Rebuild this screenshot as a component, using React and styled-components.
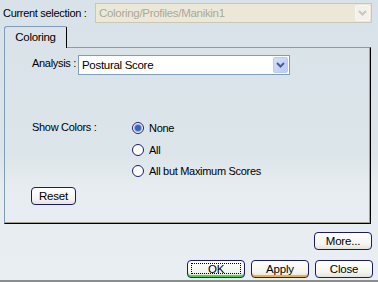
import React from "react";
import styled, { createGlobalStyle, css } from "styled-components";

const Global = createGlobalStyle`
  html, body {
    margin: 0;
    padding: 0;
  }
  body {
    font-family: "Liberation Sans", Arial, sans-serif;
    font-size: 11px;
    color: #000;
  }
`;

const Dialog = styled.div`
  width: 378px;
  height: 282px;
  box-sizing: border-box;
  background: linear-gradient(#d9e2e8 0%, #dce5ea 55%, #e6ecef 66%, #e8eef1 100%);
  border-bottom: 2px solid #8c8c8c;
  display: flex;
  flex-direction: column;
  font-family: "Liberation Sans", Arial, sans-serif;
  font-size: 11px;
  letter-spacing: -0.3px;
`;

const SelectionRow = styled.div`
  display: flex;
  align-items: center;
  padding: 3px 6px 0 3px;
  height: 20px;
`;

const Label = styled.span`
  white-space: nowrap;
  margin-right: ${(p) => p.$gap ?? 5}px;
  width: ${(p) => (p.$width ? `${p.$width}px` : "auto")};
  flex: none;
`;

const Combo = styled.div`
  display: flex;
  align-items: stretch;
  box-sizing: border-box;
  height: 20px;
  width: ${(p) => (p.$width ? `${p.$width}px` : "auto")};
  flex: ${(p) => (p.$width ? "none" : "1")};
  border: 1px solid ${(p) => (p.$disabled ? "#c9c7ba" : "#7f9db9")};
  background: ${(p) => (p.$disabled ? "#ebe8d7" : "#fff")};
  color: ${(p) => (p.$disabled ? "#aca899" : "#000")};
`;

const ComboText = styled.span`
  flex: 1;
  display: flex;
  align-items: center;
  padding-left: 3px;
  font-size: 11.5px;
`;

const ComboButton = styled.span`
  width: 15px;
  margin: 1px;
  box-sizing: border-box;
  display: flex;
  align-items: center;
  justify-content: center;
  border-radius: 2px;
  ${(p) =>
    p.$disabled
      ? css`
          background: #f2f1ea;
          border: 1px solid #f8f7f2;
        `
      : css`
          background: linear-gradient(135deg, #d4e0fc, #b8cbf6);
          border: 1px solid #bccbf2;
        `}
`;

const Chevron = ({ color }) => (
  <svg width="9" height="6" viewBox="0 0 9 6">
    <path d="M1 1 L4.5 4.5 L8 1" fill="none" stroke={color} strokeWidth="2" />
  </svg>
);

const TabStrip = styled.div`
  display: flex;
  padding-left: 4px;
  margin-top: 3px;
  position: relative;
  z-index: 1;
`;

const Tab = styled.div`
  box-sizing: border-box;
  width: 63px;
  height: 22px;
  padding-top: 4px;
  text-align: center;
  background: #dae3e9;
  border: 1px solid #7f9db9;
  border-right: 1px solid #000;
  border-bottom: none;
  border-radius: 3px 2px 0 0;
  font-size: 11.5px;
`;

const Panel = styled.div`
  box-sizing: border-box;
  margin: -1px 7px 0 4px;
  height: 177px;
  border-top: 1px solid #7f9db9;
  border-left: 1px solid #7f9db9;
  border-right: 1px solid #000;
  border-bottom: 1px solid #000;
  box-shadow: inset -1px -1px 0 #a5a293;
  padding: 7px 0 0 27px;
  display: flex;
  flex-direction: column;
`;

const FieldRow = styled.div`
  display: flex;
  align-items: flex-start;
  & > ${Label} {
    margin-top: 2px;
  }
`;

const ColorsRow = styled.div`
  display: flex;
  margin-top: 46px;
  & > ${Label} {
    width: 100px;
    margin-right: 0;
    margin-top: 0;
  }
`;

const RadioList = styled.div`
  display: flex;
  flex-direction: column;
  gap: 7.5px;
`;

const RadioItem = styled.label`
  display: flex;
  align-items: center;
  height: 14px;
  gap: 5px;
`;

const RadioDot = styled.span`
  box-sizing: border-box;
  width: 12px;
  height: 12px;
  border-radius: 50%;
  border: 1px solid #1c1c7a;
  background: #fff;
  display: flex;
  align-items: center;
  justify-content: center;
  &::after {
    content: "";
    width: 6px;
    height: 6px;
    border-radius: 50%;
    background: ${(p) => (p.$checked ? "#3d63b8" : "transparent")};
    box-shadow: ${(p) => (p.$checked ? "0 0 1px 1px #8ca4dc" : "none")};
  }
`;

const Button = styled.button`
  box-sizing: border-box;
  width: ${(p) => p.$width || 58}px;
  height: ${(p) => p.$height || 18}px;
  padding: 0;
  font-family: "Liberation Sans", Arial, sans-serif;
  font-size: 11.5px;
  letter-spacing: -0.2px;
  color: #000;
  border: 1px solid #1a1a6e;
  border-radius: 4px;
  background: linear-gradient(#ffffff, #f4f4f0 70%, #e4e3dc);
  position: relative;
  ${(p) =>
    p.$accent &&
    css`
      box-shadow: inset 0 -2px 0 ${p.$accent};
    `}
  ${(p) =>
    p.$focused &&
    css`
      &::before {
        content: "";
        position: absolute;
        inset: 2px 3px 3px 3px;
        border: 1px dotted #000;
      }
    `}
`;

const ResetWrap = styled.div`
  margin-top: 9px;
  margin-left: -1px;
`;

const MoreRow = styled.div`
  display: flex;
  justify-content: flex-end;
  padding: 8px 6px 0 0;
`;

const ActionRow = styled.div`
  display: flex;
  justify-content: flex-end;
  gap: 6px;
  padding: 10px 5px 0 0;
`;

export default function App() {
  return (
    <>
      <Global />
      <Dialog>
        <SelectionRow>
          <Label $width={88} $gap={4}>Current selection :</Label>
          <Combo $disabled>
            <ComboText>Coloring/Profiles/Manikin1</ComboText>
            <ComboButton $disabled>
              <Chevron color="#c9c7ba" />
            </ComboButton>
          </Combo>
        </SelectionRow>

        <TabStrip>
          <Tab>Coloring</Tab>
        </TabStrip>

        <Panel>
          <FieldRow>
            <Label $width={46} $gap={0}>Analysis :</Label>
            <Combo $width={212}>
              <ComboText>Postural Score</ComboText>
              <ComboButton>
                <Chevron color="#4d6185" />
              </ComboButton>
            </Combo>
          </FieldRow>

          <ColorsRow>
            <Label>Show Colors :</Label>
            <RadioList>
              <RadioItem>
                <RadioDot $checked />
                None
              </RadioItem>
              <RadioItem>
                <RadioDot />
                All
              </RadioItem>
              <RadioItem>
                <RadioDot />
                All but Maximum Scores
              </RadioItem>
            </RadioList>
          </ColorsRow>

          <ResetWrap>
            <Button $width={45} $height={18}>Reset</Button>
          </ResetWrap>
        </Panel>

        <MoreRow>
          <Button>More...</Button>
        </MoreRow>

        <ActionRow>
          <Button $focused $accent="#3adc4a">OK</Button>
          <Button $accent="#e8b43a">Apply</Button>
          <Button>Close</Button>
        </ActionRow>
      </Dialog>
    </>
  );
}
